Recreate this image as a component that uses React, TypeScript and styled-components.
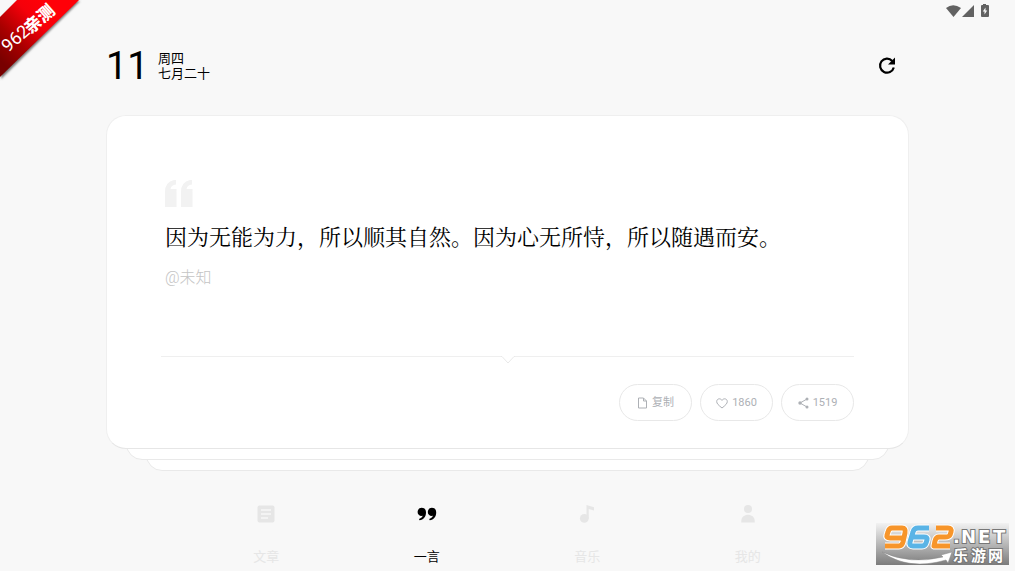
import React from "react";
import styled, { createGlobalStyle } from "styled-components";

const GlobalStyle = createGlobalStyle`
  * { box-sizing: border-box; }
  body {
    margin: 0;
    background: #f8f8f8;
    color: #000;
    font-family: Roboto, "Noto Sans CJK SC", sans-serif;
  }
  button { font-family: inherit; cursor: pointer; }
`;

const Page = styled.div`
  min-height: 100vh;
  display: flex;
  flex-direction: column;
  position: relative;
  overflow: hidden;
`;

const StatusBar = styled.div`
  display: flex;
  justify-content: flex-end;
  align-items: center;
  height: 22px;
  padding-right: 25px;
`;

const Main = styled.main`
  padding: 0 106px;
`;

const Header = styled.header`
  display: flex;
  align-items: center;
  height: 88px;
  padding-right: 12px;
`;

const Day = styled.div`
  font-size: 38px;
  line-height: 40px;
  width: 52px;
`;

const DateLines = styled.div`
  flex: 1;
  font-size: 13px;
  line-height: 15px;
`;

const IconButton = styled.button`
  display: flex;
  padding: 0;
  border: 0;
  background: none;
`;

const Card = styled.article`
  position: relative;
  z-index: 2;
  margin-top: 5px;
  padding: 64px 54px 27px;
  background: #fff;
  border: 1px solid #efefef;
  border-bottom-color: #e6e6e6;
  border-radius: 20px;
`;

const StackLayer = styled.div<{ $depth: number }>`
  position: relative;
  z-index: ${(p) => 2 - p.$depth};
  height: 32px;
  margin: -21px ${(p) => p.$depth * 20}px 0;
  background: #fff;
  border: 1px solid #e9e9e9;
  border-radius: 0 0 16px 16px;
`;

const Quote = styled.blockquote`
  margin: 0;
  padding-left: 4px;
`;

const QuoteText = styled.p`
  margin: 12px 0 0;
  font-family: "Noto Serif CJK SC", "Source Han Serif SC", "Noto Sans CJK SC", serif;
  font-size: 22px;
  line-height: 32px;
`;

const Author = styled.cite`
  display: block;
  margin-top: 14px;
  font-size: 16px;
  line-height: 24px;
  font-style: normal;
  font-weight: 300;
  color: #c4c4c4;
`;

const Divider = styled.div`
  display: flex;
  height: 8px;
  margin: 66px 0 20px;
  svg { display: block; }
`;

const Rule = styled.div`
  flex: 1;
  height: 1px;
  background: #efefef;
`;

const Actions = styled.div`
  display: flex;
  justify-content: flex-end;
  gap: 8px;
`;

const Pill = styled.button`
  display: flex;
  align-items: center;
  justify-content: center;
  gap: 4px;
  min-width: 73px;
  height: 37px;
  padding: 1px 0 0;
  border: 1px solid #e8e8e8;
  border-radius: 19px;
  background: #fff;
  color: #adb0b5;
  font-size: 11px;
  line-height: 16px;
`;

const Nav = styled.nav`
  display: flex;
  margin: 33px 81px 0 80px;
`;

const NavItem = styled.a<{ $active?: boolean }>`
  flex: 1;
  display: flex;
  flex-direction: column;
  align-items: center;
  gap: 24px;
  color: ${(p) => (p.$active ? "#000" : "#e6e6e6")};
  font-size: 13px;
  line-height: 18px;
  text-decoration: none;
`;

const Ribbon = styled.svg`
  position: absolute;
  top: 0;
  left: 0;
`;

const Watermark = styled.svg`
  position: absolute;
  right: 6px;
  bottom: 6px;
`;

const StatusIcons = () => (
  <svg width="44" height="14" viewBox="0 0 44 14" fill="#626262" aria-hidden="true">
    <path d="M0 4Q7-1.500 15 4L7.500 13Z" />
    <path d="M16 13 28 1V13Z" />
    <path d="M37 0h3v1h2q1 0 1 1v10q0 1-1 1h-6q-1 0-1-1V2q0-1 1-1h1Z" />
    <path d="M39.500 3.500 36.800 7.500H38.500V10.500L41.200 6.500H39.500Z" fill="#f8f8f8" />
  </svg>
);

const RefreshIcon = () => (
  <svg width="20" height="20" viewBox="0 0 20 20" aria-hidden="true">
    <path d="M15.200 4.900A7 7 0 1 0 16.800 11.500" fill="none" stroke="#000" strokeWidth="2.200" />
    <path d="M18 1.500V8.500H11Z" />
  </svg>
);

const OpenQuote = () => (
  <svg width="29" height="28" viewBox="0 0 29 28" fill="#f2f2f2" aria-hidden="true" display="block">
    <path d="M0 27V12Q0 2 9 0H11V4.500Q6 5 5.500 9H11.500V27Z" />
    <path d="M16 27V12Q16 2 25 0H27V4.500Q22 5 21.500 9H27.500V27Z" />
  </svg>
);

const FileIcon = () => (
  <svg width="11" height="12" viewBox="0 0 11 12" fill="none" stroke="currentColor" aria-hidden="true">
    <path d="M1.500 1H6.500L9.500 4V11H1.500ZM6.500 1V4H9.500" />
  </svg>
);

const HeartIcon = () => (
  <svg width="12" height="11" viewBox="0 0 12 11" fill="none" stroke="currentColor" aria-hidden="true">
    <path d="M6 10C2.500 7.200.7 5.600.7 3.500.7.700 4.400-.3 6 2.400 7.600-.3 11.300.7 11.300 3.500 11.300 5.600 9.500 7.200 6 10Z" />
  </svg>
);

const ShareIcon = () => (
  <svg width="11" height="12" viewBox="0 0 11 12" fill="currentColor" stroke="currentColor" aria-hidden="true">
    <path d="M9 2 2 6 9 10" fill="none" />
    <g stroke="none">
      <circle cx="9" cy="2" r="1.500" />
      <circle cx="2" cy="6" r="1.700" />
      <circle cx="9" cy="10" r="1.500" />
    </g>
  </svg>
);

const ArticleIcon = () => (
  <svg width="20" height="20" viewBox="0 0 20 20" aria-hidden="true">
    <rect x="1.500" y="1.500" width="17" height="17" rx="2" fill="currentColor" />
    <path d="M5 6H15M5 10H15M5 14H12" stroke="#f8f8f8" strokeWidth="1.500" />
  </svg>
);

const CloseQuoteIcon = () => (
  <svg width="20" height="20" viewBox="0 0 20 20" fill="currentColor" aria-hidden="true">
    <path d="M4.700 3.800C7.500 3.800 9 5.700 9 8.400 9 12.600 6.500 15.500 2.500 16.200L2 15C4.200 14.300 5.400 13.100 5.600 11.800 3 12.400.6 10.800.6 8 .6 5.600 2.400 3.800 4.700 3.800Z" />
    <path d="M14.900 3.800C17.700 3.800 19.200 5.700 19.200 8.400 19.200 12.600 16.700 15.500 12.700 16.200L12.200 15C14.400 14.300 15.600 13.100 15.800 11.800 13.200 12.400 10.800 10.800 10.800 8 10.800 5.600 12.600 3.800 14.900 3.800Z" />
  </svg>
);

const MusicIcon = () => (
  <svg width="20" height="20" viewBox="0 0 20 20" fill="currentColor" aria-hidden="true">
    <circle cx="7.300" cy="14.400" r="4.400" />
    <path d="M9.500 1 17 3.200V6.500L11.700 5V14.500H9.500Z" />
  </svg>
);

const PersonIcon = () => (
  <svg width="20" height="20" viewBox="0 0 20 20" fill="currentColor" aria-hidden="true">
    <circle cx="10" cy="5" r="4" />
    <path d="M3.300 18.500V17C3.300 8.700 16.700 8.700 16.700 17V18.500Z" />
  </svg>
);

const navItems = [
  { label: "文章", icon: <ArticleIcon /> },
  { label: "一言", icon: <CloseQuoteIcon />, active: true },
  { label: "音乐", icon: <MusicIcon /> },
  { label: "我的", icon: <PersonIcon /> },
];

const digitLayers = [
  { width: 7, orange: "#fff", blue: "#fff" },
  { width: 5, orange: "#f7952a", blue: "#5ab4e6" },
];

export default function App() {
  return (
    <Page>
      <GlobalStyle />
      <StatusBar>
        <StatusIcons />
      </StatusBar>
      <Main>
        <Header>
          <Day>11</Day>
          <DateLines>
            <div>周四</div>
            <div>七月二十</div>
          </DateLines>
          <IconButton aria-label="刷新">
            <RefreshIcon />
          </IconButton>
        </Header>
        <Card>
          <Quote>
            <OpenQuote />
            <QuoteText>因为无能为力，所以顺其自然。因为心无所恃，所以随遇而安。</QuoteText>
            <Author>@未知</Author>
          </Quote>
          <Divider>
            <Rule />
            <svg width="14" height="8" viewBox="0 0 14 8" aria-hidden="true">
              <path d="M0 .5H1L7 7 13 .5H14" fill="none" stroke="#e9e9e9" />
            </svg>
            <Rule />
          </Divider>
          <Actions>
            <Pill><FileIcon />复制</Pill>
            <Pill><HeartIcon />1860</Pill>
            <Pill><ShareIcon />1519</Pill>
          </Actions>
        </Card>
        <StackLayer $depth={1} />
        <StackLayer $depth={2} />
        <Nav>
          {navItems.map((item) => (
            <NavItem key={item.label} href="#" $active={item.active}>
              {item.icon}
              {item.label}
            </NavItem>
          ))}
        </Nav>
      </Main>
      <Ribbon width="82" height="82" viewBox="0 0 82 82">
        <defs>
          <linearGradient id="red" gradientUnits="userSpaceOnUse" x1="0" y1="60" x2="50" y2="10">
            <stop offset="0" stopColor="#780000" />
            <stop offset=".35" stopColor="#a80000" />
            <stop offset=".75" stopColor="#f5000a" />
            <stop offset="1" stopColor="#ff0008" />
          </linearGradient>
          <filter id="soft"><feGaussianBlur stdDeviation="1" /></filter>
        </defs>
        <path d="M18 1H80L1 79V18Z" fill="#777" filter="url(#soft)" />
        <path d="M17 0H79L0 77V17Z" fill="url(#red)" />
        <g transform="translate(8 53) rotate(-41)" fill="#fff" fontFamily='Roboto, "Noto Sans CJK SC", sans-serif'>
          <text fontSize="18">962</text>
          <text x="29" y="1" fontSize="17" fontWeight="900">亲测</text>
        </g>
      </Ribbon>
      <Watermark width="133" height="42" viewBox="0 0 133 42">
        <defs>
          <linearGradient id="plate" x1="0" y1="0" x2="0" y2="1">
            <stop offset="0" stopColor="#f2f2f2" />
            <stop offset=".5" stopColor="#b8b8b8" />
            <stop offset="1" stopColor="#7c7c7c" />
          </linearGradient>
        </defs>
        <rect width="133" height="42" fill="url(#plate)" />
        <g fill="none" strokeLinejoin="round">
          {digitLayers.map((layer) => (
            <g key={layer.width} strokeWidth={layer.width}>
              <path d="M9 23H23Q26 23 27 19L29 10Q30 5 26 5H16Q13 5 12 9L11 12Q10 15 14 15H27" stroke={layer.orange} />
              <path d="M53 5H42Q38 5 37 9L34 19Q33 23 37 23H46Q49 23 50 20L51 17Q52 14 48 14H36" stroke={layer.blue} />
              <path d="M60 5H72Q76 5 75 9L74 12Q73 14 69 14H63Q60 14 59 18L58 23H74" stroke={layer.orange} />
            </g>
          ))}
        </g>
        <path d="M6 29Q34 42 67 34L65 32 76 29 72 40 70 37Q32 48 6 29Z" fill="#fff" stroke="#888" strokeWidth=".5" />
        <g fill="#fff" stroke="#777" strokeWidth="2" paintOrder="stroke" fontWeight="700">
          <text x="77 85 102 117" y="20" fontSize="18" fontFamily='"DejaVu Sans", sans-serif'>.NET</text>
          <text x="77 95 112" y="38" fontSize="15" fontFamily='"Noto Sans CJK SC", sans-serif'>乐游网</text>
        </g>
      </Watermark>
    </Page>
  );
}
